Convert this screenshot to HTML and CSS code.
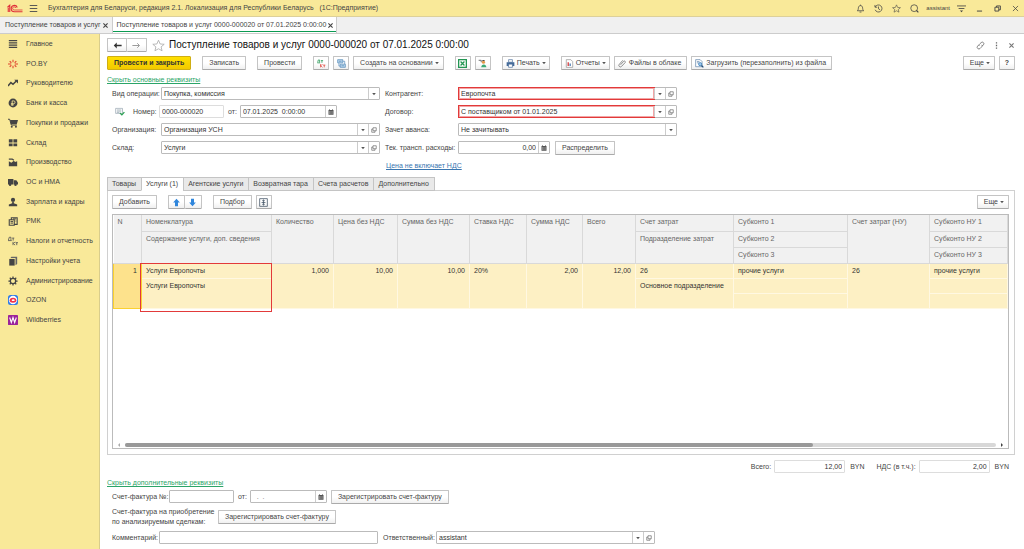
FILE: index.html
```html
<!DOCTYPE html>
<html lang="ru">
<head>
    <meta charset="UTF-8">
    <meta name="viewport" content="width=device-width, initial-scale=1.0">
    <title>Поступление товаров и услуг</title>
    <link rel="stylesheet" href="styles.css">
</head>
<body>

    <!-- Shared icons -->
    <svg class="sprite" aria-hidden="true">
        <symbol id="i-down" viewBox="0 0 10 10"><path d="M2 3.5h6L5 7z" fill="#555"/></symbol>
        <symbol id="i-open" viewBox="0 0 12 12"><path d="M4 1.5h6.5v6H4zM4 4H1.5v6.5H8v-3" fill="none" stroke="#555" stroke-width="1.2"/></symbol>
        <symbol id="i-cal" viewBox="0 0 12 12"><path d="M1 2h10v9.500H1z" fill="#555"/><path d="M3 .5v2M9 .5v2" stroke="#555" stroke-width="1.5"/><path d="M2.500 5h7M2.500 7h7M2.500 9h7" stroke="#ddd" stroke-width="1" stroke-dasharray="1.500 1"/></symbol>
        <symbol id="i-close" viewBox="0 0 10 10"><path d="M2 2l6 6M8 2l-6 6" fill="none" stroke="currentColor" stroke-width="1.600"/></symbol>
        <symbol id="i-star" viewBox="0 0 16 16"><path d="M8 1.500l2 4.600 5 .4-3.800 3.200 1.200 4.800L8 12l-4.400 2.500 1.200-4.800L1 6.500l5-.4z" fill="none" stroke="currentColor"/></symbol>
    </svg>

    <header class="titlebar">
        <svg class="logo" viewBox="0 0 32 18" aria-label="1С"><g fill="none" stroke="#e0303a" stroke-width="2.200"><path d="M1 6.500L5.500 2.500v13.500M2.500 7.500v8.500"/><path d="M20.500 7A6.300 6.300 0 1 0 14.500 15.500H31"/><path d="M17.500 8a3.200 3.200 0 1 0-3 4H31" stroke-width="1.600"/></g></svg>
        <button class="plain" aria-label="Меню"><svg class="ic" viewBox="0 0 12 12"><path d="M1 2h10M1 6h10M1 10h10" stroke="#555" stroke-width="1.300"/></svg></button>
        <span class="app-name">Бухгалтерия для Беларуси, редакция 2.1. Локализация для Республики Беларусь &nbsp; (1С:Предприятие)</span>
        <div class="title-tools">
            <button class="plain" aria-label="Уведомления"><svg class="ic" viewBox="0 0 14 14"><path d="M2 10.500h10c-1.500-1-1.500-2.500-1.700-4.500C10 3.500 8.700 2.500 7 2.500S4 3.500 3.700 6C3.500 8 3.500 9.500 2 10.500zM5.500 12.500h3M7 1v1.500" fill="none" stroke="#444" stroke-width="1.200"/></svg></button>
            <button class="plain" aria-label="История"><svg class="ic" viewBox="0 0 14 14"><path d="M2 4.500a5.500 5.500 0 1 1-.2 4.500M1.500 1.500v3.500H5M7 4v3.500l2.500 1.500" fill="none" stroke="#444" stroke-width="1.200"/></svg></button>
            <button class="plain" aria-label="Избранное"><svg class="ic dark"><use href="#i-star"/></svg></button>
            <button class="plain" aria-label="Поиск"><svg class="ic" viewBox="0 0 14 14"><circle cx="6.500" cy="6.500" r="5.300" fill="none" stroke="#444" stroke-width="1.200"/><path d="M10 10l3 3" stroke="#444" stroke-width="1.800"/></svg></button>
            <span class="user">assistant</span>
            <button class="plain" aria-label="Настройки"><svg class="ic" viewBox="0 0 14 14"><path d="M0 3h14M2.500 7h9" stroke="#444" stroke-width="1.300"/><path d="M4.500 10h5L7 13z" fill="#444"/></svg></button>
            <button class="plain" aria-label="Свернуть"><svg class="ic" viewBox="0 0 14 14"><path d="M3 11h8" stroke="#444" stroke-width="1.500"/></svg></button>
            <button class="plain" aria-label="Развернуть"><svg class="ic" viewBox="0 0 14 14"><path d="M3 5h6v6H3zM5.500 5V3H11.500v6H9" fill="none" stroke="#444" stroke-width="1.400"/></svg></button>
            <button class="plain" aria-label="Закрыть"><svg class="ic" viewBox="0 0 14 14"><path d="M3 3l8 8M11 3l-8 8" stroke="#444" stroke-width="1.200"/></svg></button>
        </div>
    </header>

    <div class="windows">
        <div class="window-tab">Поступление товаров и услуг <button class="plain" aria-label="Закрыть"><svg class="ic-s"><use href="#i-close"/></svg></button></div>
        <div class="window-tab current">Поступление товаров и услуг 0000-000020 от 07.01.2025 0:00:00 <button class="plain" aria-label="Закрыть"><svg class="ic-s"><use href="#i-close"/></svg></button></div>
    </div>

    <div class="layout">
        <nav class="sidebar">
            <a href="#"><svg viewBox="0 0 12 12"><path d="M1 2h10M1 4.700h10M1 7.400h10M1 10h10" stroke="#444" stroke-width="1.400"/></svg>Главное</a>
            <a href="#"><svg viewBox="0 0 12 12"><g stroke="#e0452f" stroke-width="1.300"><path d="M6 1v3M6 8v3M0 6h4M8 6h4M2 2.500l2 2M8 7.500l2 2M10 2.500l-2 2M4 7.500l-2 2"/></g></svg>PO.BY</a>
            <a href="#"><svg viewBox="0 0 12 12"><path d="M0 9.500l3.500-4 2.500 2 4-4" fill="none" stroke="#444" stroke-width="1.800"/><path d="M7.500 2H12v4.500z" fill="#444"/></svg>Руководителю</a>
            <a href="#"><svg viewBox="0 0 12 12"><circle cx="6" cy="6" r="5.300" fill="#444"/><path d="M5 9.500v-6h1.800a1.600 1.600 0 0 1 0 3.300H3.500M3.500 8.200H7" fill="none" stroke="#f9e999" stroke-width="1"/></svg>Банк и касса</a>
            <a href="#"><svg viewBox="0 0 12 12"><path d="M0 1.500h2l2 7h6.500" fill="none" stroke="#444" stroke-width="1.200"/><path d="M2.500 2.500H12l-1.500 5h-7z" fill="#444"/><circle cx="4.500" cy="10.500" r="1.200" fill="#444"/><circle cx="9.500" cy="10.500" r="1.200" fill="#444"/></svg>Покупки и продажи</a>
            <a href="#"><svg viewBox="0 0 12 12"><path d="M1 1.500h4.500v4H1zM6.500 1.500H11v4H6.500zM1 6.500h4.500V10H1zM6.500 6.500H11V10H6.500z" fill="#444"/></svg>Склад</a>
            <a href="#"><svg viewBox="0 0 12 12"><path d="M1 11V5l3 2 3-2.500L8.500 6 11 5v6z" fill="#444"/><path d="M1 2.500h4l2 1.500" fill="none" stroke="#444" stroke-width="1.600"/></svg>Производство</a>
            <a href="#"><svg viewBox="0 0 12 12"><path d="M0 2.500h6.500V9H0zM7 4h3l2 2.500V9H7z" fill="#444"/><circle cx="2.500" cy="9.300" r="1.500" fill="#444"/><circle cx="9" cy="9.300" r="1.500" fill="#444"/></svg>ОС и НМА</a>
            <a href="#"><svg viewBox="0 0 12 12"><circle cx="6" cy="3.500" r="2.500" fill="#444"/><path d="M5 6h2v1.500l4 1.500v2H1V9l4-1.500z" fill="#444"/></svg>Зарплата и кадры</a>
            <a href="#"><svg viewBox="0 0 12 12"><path d="M1.500 4.500h6v6.500h-6zM4 4V2h7v8H8" fill="none" stroke="#444" stroke-width="1.300"/><path d="M3 6.500h3M3 8.500h3M6 3.500h4M9 6h1" stroke="#444" stroke-width="1.200"/></svg>РМК</a>
            <a href="#"><svg viewBox="0 0 12 12"><path d="M.5 5l1-3.500h2V5M0 5.500h4.500M5 2.500h2.500M6.200 2.500v3M6 7v4M8.500 7L6.500 9l2 2M9 8h3M10.500 8v3" fill="none" stroke="#555" stroke-width="1"/></svg>Налоги и отчетность</a>
            <a href="#"><svg viewBox="0 0 12 12"><path d="M1.500 3.500h6.500v8H1.500z" fill="#444"/><path d="M3 2.500L4 1h7v8.500L9 11V2.500z" fill="#666"/></svg>Настройки учета</a>
            <a href="#"><svg viewBox="0 0 12 12"><circle cx="6" cy="6" r="3.200" fill="none" stroke="#444" stroke-width="1.500"/><path d="M6 .5v2M6 9.500v2M.5 6h2M9.500 6h2M2.100 2.100l1.400 1.400M8.500 8.500l1.400 1.400M9.900 2.100L8.500 3.500M3.500 8.500L2.100 9.900" stroke="#444" stroke-width="1.500"/></svg>Администрирование</a>
            <a href="#"><svg viewBox="0 0 12 12"><rect width="12" height="12" rx="3" fill="#2f7be8"/><circle cx="6" cy="6" r="5" fill="#fff"/><ellipse cx="6" cy="6.200" rx="4" ry="3" fill="#f0334a"/><ellipse cx="6.200" cy="6.200" rx="1.800" ry="1" fill="#fff"/></svg>OZON</a>
            <a href="#"><svg viewBox="0 0 12 12"><rect width="12" height="12" rx="1" fill="#9b249b"/><path d="M2 3l2 6 2-6 2 6 2-6" fill="none" stroke="#fff" stroke-width="1.300"/></svg>Wildberries</a>
        </nav>

        <main class="document">
            <div class="doc-head">
                <div class="btn-pair">
                    <button class="btn" aria-label="Назад"><svg class="ic" viewBox="0 0 12 12"><path d="M11.500 6H3" stroke="#333" stroke-width="2"/><path d="M5 2L1 6l4 4z" fill="#333"/></svg></button>
                    <button class="btn" aria-label="Вперед"><svg class="ic" viewBox="0 0 12 12"><path d="M.5 6h9M7 3l3 3-3 3" fill="none" stroke="#999" stroke-width="1.300"/></svg></button>
                </div>
                <button class="plain fav" aria-label="В избранное"><svg><use href="#i-star"/></svg></button>
                <h1>Поступление товаров и услуг 0000-000020 от 07.01.2025 0:00:00</h1>
                <div class="doc-tools">
                    <button class="plain" aria-label="Ссылка"><svg class="ic" viewBox="0 0 14 14"><path d="M5 7.500C4 5.500 5.500 5 8 2.500a2.300 2.300 0 0 1 3.500 3.500L9.500 8M9 6c1.500 2 0 3-2.500 5.500A2.300 2.300 0 0 1 2.500 8l2-2" fill="none" stroke="#666" stroke-width="1.200"/></svg></button>
                    <button class="plain" aria-label="Еще"><svg class="ic" viewBox="0 0 14 14"><path d="M6 2h2v2H6zM6 6h2v2H6zM6 10h2v2H6z" fill="#666"/></svg></button>
                    <button class="plain muted" aria-label="Закрыть"><svg class="ic-s"><use href="#i-close"/></svg></button>
                </div>
            </div>

            <div class="toolbar">
                <button class="btn primary">Провести и закрыть</button>
                <button class="btn">Записать</button>
                <button class="btn">Провести</button>
                <div class="group">
                    <button class="btn icon" aria-label="Дт/Кт"><svg class="ic" viewBox="0 0 14 14"><path d="M1 5.500l1-4h2v4M.5 6h4.500M6 2.500h3.500M7.700 2.500V6" fill="none" stroke="#2a9a58" stroke-width="1.200"/><path d="M5.500 8v5M8.500 8L6 10.500 8.500 13M9.500 9.500H13M11.300 9.500V13" fill="none" stroke="#e0463c" stroke-width="1.200"/></svg></button>
                    <button class="btn icon" aria-label="Структура подчиненности"><svg class="ic" viewBox="0 0 14 14"><path d="M1 1h8v5H1zM5 8h8v5H5z" fill="#bcd6ec" stroke="#4a83b5"/><path d="M3 6v5h2M9 3.500h3V8M3 3.500h4M7 10.500h4" fill="none" stroke="#4a83b5"/></svg></button>
                    <button class="btn">Создать на основании <svg class="caret"><use href="#i-down"/></svg></button>
                </div>
                <div class="group">
                    <button class="btn icon" aria-label="Excel"><svg class="ic" viewBox="0 0 14 14"><rect x="1" y="1" width="12" height="12" fill="#fff" stroke="#239653" stroke-width="2"/><path d="M4 4l6 6M10 4l-6 6" stroke="#239653" stroke-width="2"/></svg></button>
                    <button class="btn icon" aria-label="Контрагент"><svg class="ic" viewBox="0 0 14 14"><path d="M1 2h4v3" fill="none" stroke="#555" stroke-width="1.300"/><circle cx="8.500" cy="5" r="2.500" fill="#e39a4b"/><path d="M5 13c0-6 8-6 8 0z" fill="#3caa76"/><path d="M6 3c1-2 4-2 5 0z" fill="#444"/></svg></button>
                </div>
                <button class="btn with-icon"><svg class="ic" viewBox="0 0 14 14"><path d="M4 1h6v4H4z" fill="#fff" stroke="#456b99"/><path d="M1 5h12v6H1z" fill="#456b99"/><path d="M4 8h6v5H4z" fill="#fff" stroke="#456b99"/></svg>Печать <svg class="caret"><use href="#i-down"/></svg></button>
                <div class="group">
                    <button class="btn with-icon"><svg class="ic" viewBox="0 0 14 14"><path d="M2 1h7l3 3v9H2z" fill="#fff" stroke="#888"/><path d="M5 5v6" stroke="#d83939" stroke-width="2"/><path d="M8 7v4" stroke="#4878b0" stroke-width="2"/></svg>Отчеты <svg class="caret"><use href="#i-down"/></svg></button>
                    <button class="btn with-icon"><svg class="ic" viewBox="0 0 14 14"><path d="M4 9l5-5.500a1.500 1.500 0 0 1 2.200 2L5.500 11.500A2.300 2.300 0 0 1 2 8.300L7.500 2" fill="none" stroke="#777" stroke-width="1.300"/></svg>Файлы в облаке</button>
                    <button class="btn with-icon"><svg class="ic" viewBox="0 0 14 14"><path d="M1 1h7l3 3v8H1z" fill="#fff" stroke="#51779f"/><path d="M3 4h4M3 6h3" stroke="#51779f"/><circle cx="8" cy="8" r="2.500" fill="#9cc7ec" stroke="#2871ae"/><path d="M10 10l3 3" stroke="#244d78" stroke-width="2"/></svg>Загрузить (перезаполнить) из файла</button>
                </div>
                <div class="group end">
                    <button class="btn">Еще <svg class="caret"><use href="#i-down"/></svg></button>
                    <button class="btn icon help">?</button>
                </div>
            </div>

            <a class="toggle" href="#">Скрыть основные реквизиты</a>

            <div class="form">
                <div class="form-col">
                    <div class="row">
                        <label for="operation">Вид операции:</label>
                        <div class="field"><select id="operation"><option>Покупка, комиссия</option></select><span class="part"><svg><use href="#i-down"/></svg></span></div>
                    </div>
                    <div class="row">
                        <svg class="posted" viewBox="0 0 16 14"><path d="M1 2h11v8H1z" fill="#fff" stroke="#8a9aa6"/><path d="M3 4.500h7M3 6.500h7M3 8.500h4" stroke="#8a9aa6"/><path d="M8 9.500l3 3 4-4.500" fill="none" stroke="#2ba052" stroke-width="2"/></svg>
                        <label class="narrow" for="number">Номер:</label>
                        <div class="field number light"><input id="number" type="text" value="0000-000020"></div>
                        <label class="auto" for="date">от:</label>
                        <div class="field date"><input id="date" type="text" value="07.01.2025  0:00:00"><button class="part" aria-label="Календарь"><svg><use href="#i-cal"/></svg></button></div>
                    </div>
                    <div class="row">
                        <label for="org">Организация:</label>
                        <div class="field"><input id="org" type="text" value="Организация УСН"><button class="part" aria-label="Выбрать"><svg><use href="#i-down"/></svg></button><button class="part" aria-label="Открыть"><svg><use href="#i-open"/></svg></button></div>
                    </div>
                    <div class="row">
                        <label for="store">Склад:</label>
                        <div class="field"><input id="store" type="text" value="Услуги"><button class="part" aria-label="Выбрать"><svg><use href="#i-down"/></svg></button><button class="part" aria-label="Открыть"><svg><use href="#i-open"/></svg></button></div>
                    </div>
                </div>
                <div class="form-col right">
                    <div class="row">
                        <label for="partner">Контрагент:</label>
                        <div class="field"><input class="marked" id="partner" type="text" value="Европочта"><button class="part" aria-label="Выбрать"><svg><use href="#i-down"/></svg></button><button class="part" aria-label="Открыть"><svg><use href="#i-open"/></svg></button></div>
                    </div>
                    <div class="row">
                        <label for="contract">Договор:</label>
                        <div class="field"><input class="marked" id="contract" type="text" value="С поставщиком от 01.01.2025"><button class="part" aria-label="Выбрать"><svg><use href="#i-down"/></svg></button><button class="part" aria-label="Открыть"><svg><use href="#i-open"/></svg></button></div>
                    </div>
                    <div class="row">
                        <label for="advance">Зачет аванса:</label>
                        <div class="field"><select id="advance"><option>Не зачитывать</option></select><span class="part"><svg><use href="#i-down"/></svg></span></div>
                    </div>
                    <div class="row">
                        <label for="transport">Тек. трансп. расходы:</label>
                        <div class="field cost"><input class="num" id="transport" type="text" value="0,00"><button class="part" aria-label="Калькулятор"><svg><use href="#i-cal"/></svg></button></div>
                        <button class="btn">Распределить</button>
                    </div>
                    <a class="price-link" href="#">Цена не включает НДС</a>
                </div>
            </div>

            <div class="tabs" role="tablist">
                <button role="tab">Товары</button>
                <button role="tab" class="active" aria-selected="true">Услуги (1)</button>
                <button role="tab">Агентские услуги</button>
                <button role="tab">Возвратная тара</button>
                <button role="tab">Счета расчетов</button>
                <button role="tab">Дополнительно</button>
            </div>

            <section class="panel">
                <div class="toolbar">
                    <button class="btn">Добавить</button>
                    <div class="btn-pair">
                        <button class="btn icon" aria-label="Вверх"><svg class="ic" viewBox="0 0 12 12"><path d="M6 1l4.500 5H8v5H4V6H1.500z" fill="#2f86dc"/></svg></button>
                        <button class="btn icon" aria-label="Вниз"><svg class="ic" viewBox="0 0 12 12"><path d="M6 11L1.500 6H4V1h4v5h2.500z" fill="#2f86dc"/></svg></button>
                    </div>
                    <div class="group">
                        <button class="btn">Подбор</button>
                        <button class="btn icon" aria-label="Высота строк"><svg class="ic" viewBox="0 0 14 14"><path d="M1 1h12v12H1zM7 3v8M5 4.500L7 3l2 1.500M5 9.500L7 11l2-1.500M4 7h6" fill="none" stroke="#445566" stroke-width="1.200"/></svg></button>
                    </div>
                    <div class="group end">
                        <button class="btn">Еще <svg class="caret"><use href="#i-down"/></svg></button>
                    </div>
                </div>

                <div class="grid">
                    <table>
                        <colgroup>
                            <col class="c-n"><col class="c-item"><col class="c-qty"><col class="c-price"><col class="c-sum"><col class="c-rate"><col class="c-vat"><col class="c-total"><col class="c-acc"><col class="c-sub"><col class="c-accnu"><col>
                        </colgroup>
                        <thead>
                            <tr>
                                <th rowspan="3">N</th>
                                <th>Номенклатура</th>
                                <th rowspan="3">Количество</th>
                                <th rowspan="3">Цена без НДС</th>
                                <th rowspan="3">Сумма без НДС</th>
                                <th rowspan="3">Ставка НДС</th>
                                <th rowspan="3">Сумма НДС</th>
                                <th rowspan="3">Всего</th>
                                <th>Счет затрат</th>
                                <th>Субконто 1</th>
                                <th rowspan="3">Счет затрат (НУ)</th>
                                <th>Субконто НУ 1</th>
                            </tr>
                            <tr>
                                <th rowspan="2">Содержание услуги, доп. сведения</th>
                                <th rowspan="2">Подразделение затрат</th>
                                <th>Субконто 2</th>
                                <th>Субконто НУ 2</th>
                            </tr>
                            <tr>
                                <th>Субконто 3</th>
                                <th>Субконто НУ 3</th>
                            </tr>
                        </thead>
                        <tbody>
                            <tr>
                                <td rowspan="3" class="num selected">1</td>
                                <td class="marked-cell">Услуги Европочты</td>
                                <td rowspan="3" class="num">1,000</td>
                                <td rowspan="3" class="num">10,00</td>
                                <td rowspan="3" class="num">10,00</td>
                                <td rowspan="3">20%</td>
                                <td rowspan="3" class="num">2,00</td>
                                <td rowspan="3" class="num">12,00</td>
                                <td>26</td>
                                <td>прочие услуги</td>
                                <td rowspan="3">26</td>
                                <td>прочие услуги</td>
                            </tr>
                            <tr>
                                <td rowspan="2">Услуги Европочты</td>
                                <td rowspan="2">Основное подразделение</td>
                                <td></td>
                                <td></td>
                            </tr>
                            <tr>
                                <td></td>
                                <td></td>
                            </tr>
                        </tbody>
                    </table>
                    <div class="scrollbar">
                        <svg viewBox="0 0 6 6"><path d="M4 1v4L2 3z" fill="#aaa"/></svg>
                        <div class="track"><div class="thumb"></div></div>
                        <svg viewBox="0 0 6 6"><path d="M2 1v4l2-2z" fill="#444"/></svg>
                    </div>
                </div>
            </section>

            <div class="totals">
                <label for="total">Всего:</label>
                <div class="field light"><input class="num" id="total" type="text" value="12,00" readonly></div>
                <span class="currency">BYN</span>
                <label for="vat">НДС (в т.ч.):</label>
                <div class="field light"><input class="num" id="vat" type="text" value="2,00" readonly></div>
                <span>BYN</span>
            </div>

            <a class="toggle" href="#">Скрыть дополнительные реквизиты</a>

            <div class="extra">
                <div class="row">
                    <label class="invoice" for="invoice">Счет-фактура №:</label>
                    <div class="field number"><input id="invoice" type="text"></div>
                    <label class="auto" for="invoice-date">от:</label>
                    <div class="field invoice-date"><input id="invoice-date" type="text" placeholder="  .  ."><button class="part" aria-label="Календарь"><svg><use href="#i-cal"/></svg></button></div>
                    <button class="btn">Зарегистрировать счет-фактуру</button>
                </div>
                <div class="row tall">
                    <span class="deals">Счет-фактура на приобретение<br>по анализируемым сделкам:</span>
                    <button class="btn">Зарегистрировать счет-фактуру</button>
                </div>
                <div class="row">
                    <label class="comment" for="comment">Комментарий:</label>
                    <div class="field wide"><input id="comment" type="text"></div>
                    <label class="responsible" for="responsible">Ответственный:</label>
                    <div class="field wide"><input id="responsible" type="text" value="assistant"><button class="part" aria-label="Выбрать"><svg><use href="#i-down"/></svg></button><button class="part" aria-label="Открыть"><svg><use href="#i-open"/></svg></button></div>
                </div>
            </div>
        </main>
    </div>

</body>
</html>
```
FILE: styles.css
```css
* { box-sizing: border-box; }
body { margin: 0; min-height: 100vh; display: flex; flex-direction: column; background: #fff; color: #444; font: 7px/10px "Liberation Sans", Arial, sans-serif; }
button, input, select { font: inherit; color: inherit; margin: 0; padding: 0; border: none; border-radius: 0; }
button { cursor: pointer; white-space: nowrap; }
input, select { background: transparent; outline: none; min-width: 0; flex: 1; color: #333; }
select { appearance: none; }
svg { display: block; flex: none; }
.sprite { position: absolute; width: 0; height: 0; }
.plain { background: none; display: flex; align-items: center; }
.ic { width: 9px; height: 9px; }
.ic-s { width: 7px; height: 7px; }
.dark { color: #444; }
.muted { color: #777; }

/* Window title */
.titlebar { height: 17px; display: flex; align-items: center; padding: 0 4px 0 7px; background: #f9e999; border-bottom: 1px solid #ddd09a; }
.logo { width: 16px; height: 9px; margin-right: 6px; }
.app-name { margin-left: 10px; white-space: nowrap; }
.title-tools { margin-left: auto; display: flex; align-items: center; gap: 9px; }
.user { font-size: 6px; margin: 0 -2px; }

/* Opened windows */
.windows { height: 17px; display: flex; background: #f0f0f0; border-bottom: 1px solid #ccc; }
.window-tab { display: flex; align-items: center; gap: 1px; padding: 0 3px 0 5px; white-space: nowrap; border-right: 1px solid #ccc; }
.window-tab.current { padding: 0 2px 0 4px; background: #fff; box-shadow: inset 0 -1px #fff, inset 0 -2px #0b9a52; }

.layout { flex: 1; display: flex; }
.sidebar { width: 100px; flex: none; background: #f9e999; border-right: 1px solid #d9cd8c; display: grid; grid-template-rows: repeat(15, 1fr); align-self: stretch; padding-bottom: 219px; }
.sidebar a { display: flex; align-items: center; gap: 8px; padding-left: 8px; color: #444; text-decoration: none; white-space: nowrap; }
.sidebar svg { width: 10px; height: 10px; }

.document { flex: 1; min-width: 0; display: flex; flex-direction: column; padding: 4px 9px 5px 7px; }

/* Buttons */
.btn { height: 14px; padding: 0 6px; display: flex; align-items: center; justify-content: center; background: linear-gradient(#fff 50%, #f0f0f0); border: 1px solid #c4c4c4; border-bottom-color: #aaa; border-radius: 1px; }
.btn:hover { background: #f4f4f4; }
.btn.primary { background: linear-gradient(#ffe000, #f2c900); border-color: #cfae14; color: #333; font-weight: bold; }
.btn.icon { width: 16px; padding: 0; }
.btn.with-icon { padding: 0 5px 0 3px; }
.with-icon .ic { margin-right: 2px; }
.btn.help { font-weight: bold; }
.caret { width: 6px; height: 6px; margin-left: 1px; margin-right: -3px; }
.btn-pair { display: flex; }
.btn-pair .btn { width: 20px; padding: 0; }
.btn-pair .btn.icon { width: 17px; }
.btn-pair .btn + .btn { border-left: none; }
.toolbar { display: flex; gap: 11px; }
.group { display: flex; gap: 4px; }
.end { margin-left: auto; }

.doc-head { display: flex; align-items: center; height: 14px; }
.doc-head h1 { margin: 0; font-size: 10px; line-height: 14px; font-weight: normal; color: #111; white-space: nowrap; }
.fav { margin: 0 4px 0 5px; color: #aaa; }
.fav svg { width: 13px; height: 13px; }
.doc-tools { margin-left: auto; display: flex; align-items: center; gap: 7px; }
.doc-head + .toolbar { margin-top: 4px; }

.toggle { align-self: flex-start; margin: 5px 0 2px; color: #2ba568; }

/* Form fields */
.form { display: flex; gap: 5px; padding-left: 5px; }
.form-col { width: 268px; display: flex; flex-direction: column; gap: 5px; }
.form-col.right { width: 292px; }
.row { display: flex; align-items: center; height: 13px; }
.form label { width: 49px; flex: none; white-space: nowrap; }
.form .right label { width: 73px; }
.form .narrow { width: 26px; }
.form .auto, .auto { width: auto; margin: 0 3px 0 4px; }
.posted { width: 10px; height: 9px; margin: 0 8px 0 3px; }
.field { flex: 1; height: 13px; display: flex; border: 1px solid #bbb; border-radius: 1px; background: #fff; }
.field.light { border-color: #ddd; }
.field input, .field select { padding: 0 2px; }
.field .num { text-align: right; }
.part { width: 11px; display: flex; align-items: center; justify-content: center; background: none; border-left: 1px solid #ccc; }
.part svg { width: 6px; height: 6px; }
.field.number { flex: none; width: 65px; }
.field.date { flex: none; width: 97px; }
.field.cost { flex: none; width: 92px; margin-right: 5px; }
.marked { outline: 1px solid #e23a3a; box-shadow: inset 0 0 0 1px #f3a5a5; }
.price-link { align-self: flex-start; padding: 3px 0 0 1px; margin-top: -1px; color: #3a76b0; }

/* Tabs */
.tabs { display: flex; margin-top: 6px; position: relative; z-index: 1; margin-bottom: -1px; }
.tabs button { height: 14px; padding: 0 5px 0 4px; background: #e9e9e9; border: 1px solid #c4c4c4; border-right: none; }
.tabs button:last-child { border-right: 1px solid #c4c4c4; }
.tabs .active { background: #fff; border-bottom-color: #fff; }
.panel { flex: 1; display: flex; flex-direction: column; gap: 5px; padding: 4px 5px 5px 4px; border: 1px solid #d0d0d0; }

/* Services table */
.grid { flex: 1; display: flex; flex-direction: column; border: 1px solid #bbb; overflow: hidden; }
table { width: 100%; table-layout: fixed; border-collapse: collapse; }
th, td { height: 15px; padding: 2px 4px; text-align: left; vertical-align: top; font-weight: normal; line-height: 10px; white-space: nowrap; overflow: hidden; }
th { height: 16px; background: #f1f1f1; border: 1px solid #d9d9d9; border-top: none; color: #666; }
td { background: #fdf0c4; border: 1px solid #fff8e2; color: #333; }
th:first-child { border-left: none; }
td.num { text-align: right; }
td.selected { background: #fde28c; border: 1px solid #fbd12f; }
/* Red frame round both lines of the item */
.marked-cell { position: relative; overflow: visible; }
.marked-cell::after { content: ""; position: absolute; top: -1px; left: -2px; right: -1px; height: 47px; border: 1px solid #e23a3a; }
.c-n { width: 28px; }
.c-item { width: 130px; }
.c-qty { width: 62px; }
.c-price { width: 64px; }
.c-sum { width: 72px; }
.c-rate { width: 57px; }
.c-vat { width: 56px; }
.c-total { width: 53px; }
.c-acc { width: 98px; }
.c-sub { width: 114px; }
.c-accnu { width: 82px; }
.scrollbar { margin-top: auto; display: flex; align-items: center; gap: 3px; padding: 0 3px; }
.scrollbar svg { width: 6px; height: 6px; }
.track { flex: 1; height: 4px; border-radius: 2px; background: #d8d8d8; }
.thumb { width: 79%; height: 4px; border-radius: 2px; background: #999; }

/* Totals and additional details */
.totals { display: flex; justify-content: flex-end; align-items: center; margin-top: 5px; padding-right: 6px; }
.totals .field { flex: none; width: 71px; margin: 0 5px 0 3px; }
.currency { margin-right: 12px; }
.extra { display: flex; flex-direction: column; gap: 4px; padding-left: 5px; }
.totals + .toggle { margin-bottom: 2px; }
.invoice { width: 57px; }
.field.invoice-date { flex: none; width: 77px; margin-right: 4px; }
.row.tall { height: 20px; }
.deals { width: 106px; }
.comment { width: 47px; }
.responsible { width: 53px; margin-left: 5px; }
.field.wide { flex: none; width: 219px; }
```
